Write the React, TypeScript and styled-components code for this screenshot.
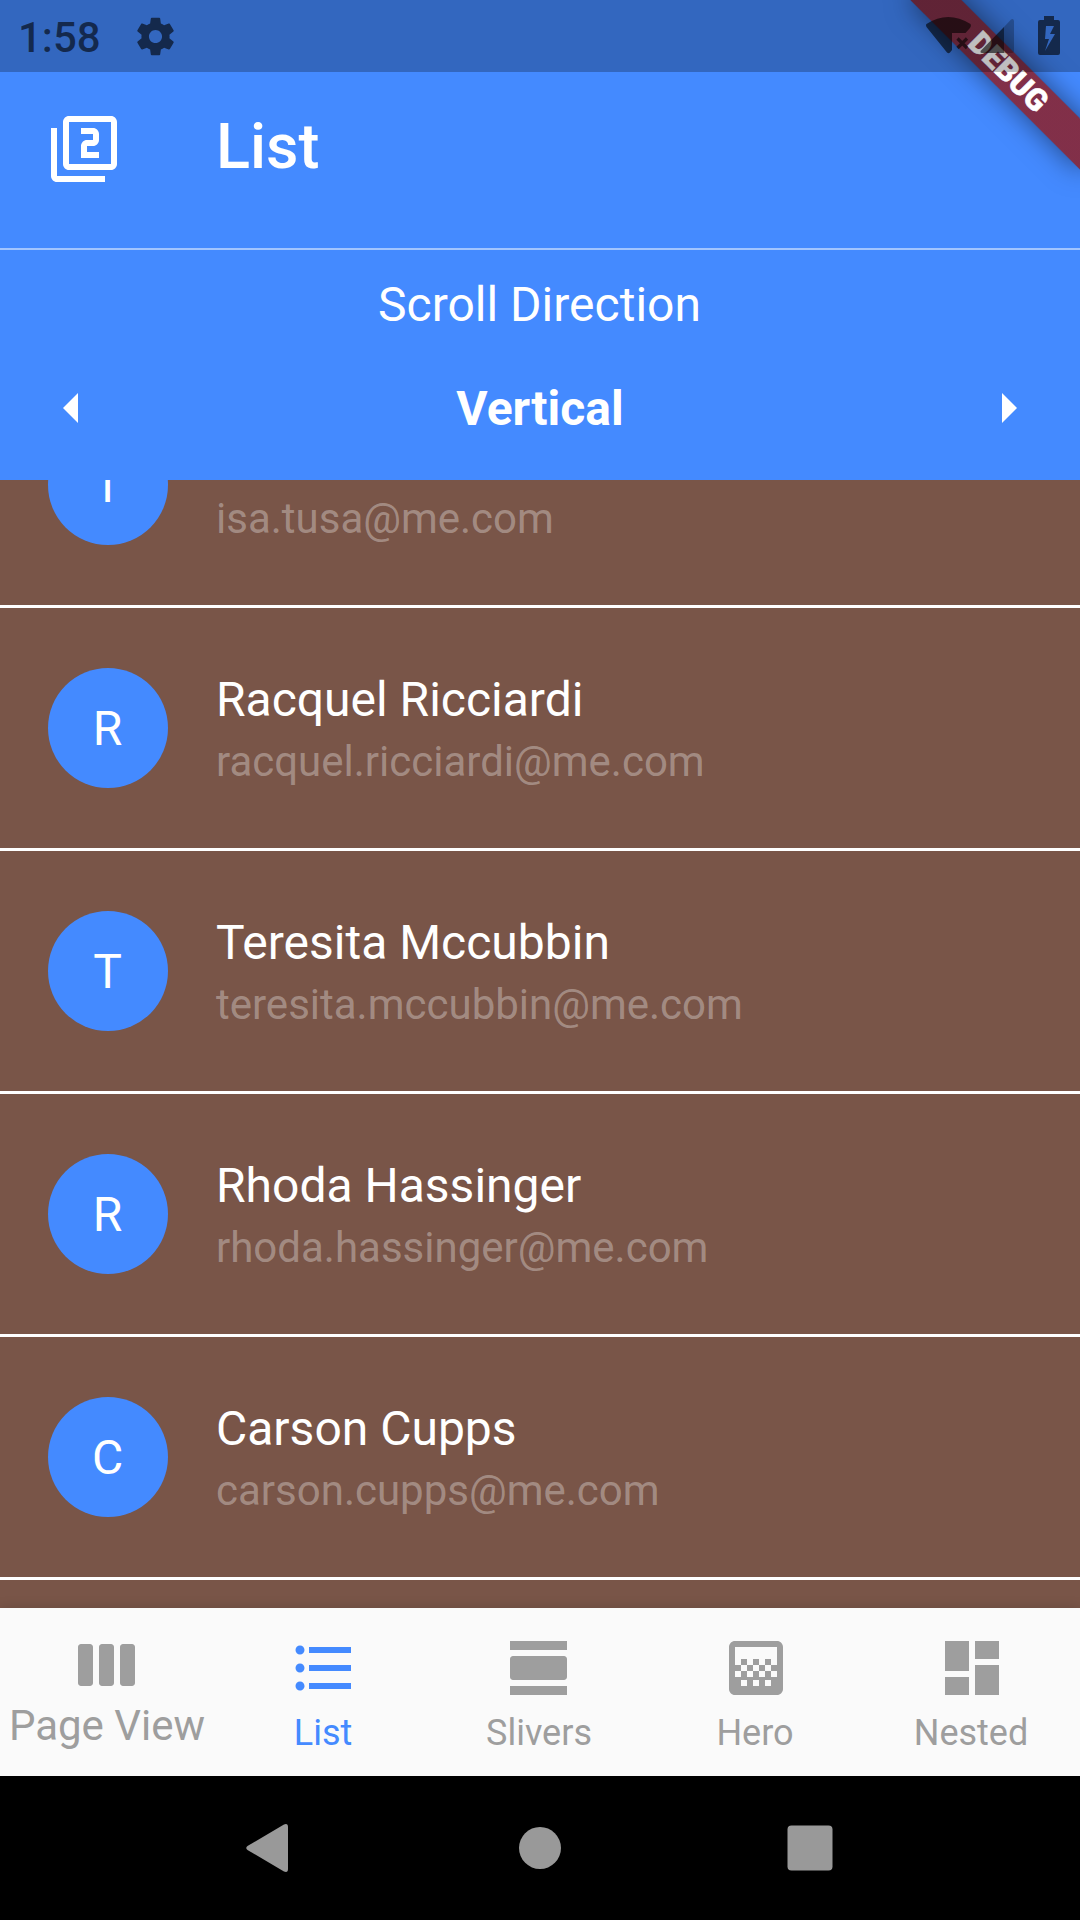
import React from "react";
import styled, { createGlobalStyle } from "styled-components";

const Global = createGlobalStyle`
  html, body { margin: 0; padding: 0; background: #000; }
  * { box-sizing: border-box; }
`;

const Screen = styled.div`
  position: relative;
  width: 1080px;
  height: 1920px;
  display: flex;
  flex-direction: column;
  overflow: hidden;
  font-family: Roboto, sans-serif;
  color: #fff;
`;

const StatusBar = styled.div`
  position: absolute;
  z-index: 3;
  inset: 0 0 auto 0;
  height: 72px;
  display: flex;
  align-items: center;
  padding: 0 20px 0 18px;
  background: rgba(0, 0, 0, 0.25);
  color: rgba(0, 0, 0, 0.6);
`;

const Clock = styled.span`
  width: 112px;
  font-size: 42px;
  line-height: 50px;
  font-weight: 500;
  padding-top: 3px;
`;

const Glyph = styled.svg<{ $w: number; $h: number; $ml?: number }>`
  display: block;
  flex: none;
  width: ${(p) => p.$w}px;
  height: ${(p) => p.$h}px;
  margin-left: ${(p) => p.$ml ?? 0}px;
  fill: currentColor;
`;

const Spacer = styled.div`
  flex: 1;
`;

const BannerCorner = styled.div`
  position: absolute;
  z-index: 2;
  top: 0;
  right: 0;
  width: 300px;
  height: 300px;
  overflow: hidden;
  pointer-events: none;
`;

const BannerRibbon = styled.div`
  position: absolute;
  top: 83.5px;
  left: 180px;
  width: 240px;
  height: 36px;
  transform-origin: 120px -83.5px;
  transform: rotate(45deg);
  display: flex;
  align-items: center;
  justify-content: center;
  background: linear-gradient(rgba(183, 28, 28, 0.627), rgba(183, 28, 28, 0.627)),
    rgba(0, 0, 0, 0.42);
  box-shadow: 0 0 28px rgba(0, 0, 0, 0.5);
  font-size: 30.6px;
  line-height: 36px;
  font-weight: 900;
  -webkit-text-stroke: 0.6px #fff;
`;

const Header = styled.header`
  flex: none;
  height: 480px;
  padding-top: 72px;
  display: flex;
  flex-direction: column;
  background: #448aff;
`;

const TitleRow = styled.div`
  height: 176px;
  display: flex;
  align-items: flex-start;
  padding: 41px 48px 0;
`;

const Title = styled.h1`
  margin: -2px 0 0 96px;
  font-size: 63px;
  line-height: 72px;
  font-weight: 500;
`;

const HeaderRule = styled.div`
  height: 2px;
  background: rgba(255, 255, 255, 0.5);
`;

const OptionLabel = styled.div`
  margin: 27px 1px 0 0;
  text-align: center;
  font-size: 48px;
  line-height: 56px;
`;

const OptionRow = styled.div`
  display: flex;
  align-items: center;
  justify-content: space-between;
  height: 72px;
  margin-top: 39px;
  padding: 0 36px;
`;

const OptionValue = styled.span`
  padding-top: 2px;
  font-size: 48px;
  line-height: 56px;
  font-weight: 700;
`;

const List = styled.main`
  flex: none;
  height: 1128px;
  overflow: hidden;
  display: flex;
  flex-direction: column;
  background: #795548;
`;

const Row = styled.div<{ $offset?: number }>`
  flex: none;
  height: 243px;
  margin-top: ${(p) => p.$offset ?? 0}px;
  display: flex;
  align-items: center;
  padding: 0 48px;
  border-bottom: 3px solid #fff;
`;

const Avatar = styled.div`
  flex: none;
  width: 120px;
  height: 120px;
  border-radius: 50%;
  display: flex;
  align-items: center;
  justify-content: center;
  padding: 2px 1px 0 0;
  background: #448aff;
  font-size: 48px;
  line-height: 56px;
`;

const Contact = styled.div`
  margin-left: 48px;
  padding-top: 2px;
`;

const Name = styled.div`
  font-size: 48px;
  line-height: 57px;
`;

const Email = styled.div`
  margin-top: 8px;
  font-size: 42px;
  line-height: 51px;
  color: rgba(255, 255, 255, 0.33);
`;

const Tabs = styled.nav`
  flex: none;
  height: 168px;
  display: flex;
  background: #fafafa;
  box-shadow: 0 0 12px rgba(0, 0, 0, 0.15);
`;

const Tab = styled.div<{ $active?: boolean; $large?: boolean }>`
  width: 216px;
  display: flex;
  flex-direction: column;
  align-items: center;
  gap: ${(p) => (p.$large ? 0 : 4)}px;
  padding-top: ${(p) => (p.$large ? 21 : 24)}px;
  color: ${(p) => (p.$active ? "#448aff" : "#9e9e9e")};
  font-size: ${(p) => (p.$large ? 42 : 36)}px;
  line-height: 50px;
  white-space: nowrap;
`;

const TabLabel = styled.span`
  margin-right: 2px;
`;

const SystemNav = styled.footer`
  flex: none;
  height: 144px;
  display: flex;
  align-items: center;
  justify-content: center;
  gap: 198px;
  background: #000;
  color: #999;
`;

const contacts = [
  { name: "Isa Tusa", email: "isa.tusa@me.com" },
  { name: "Racquel Ricciardi", email: "racquel.ricciardi@me.com" },
  { name: "Teresita Mccubbin", email: "teresita.mccubbin@me.com" },
  { name: "Rhoda Hassinger", email: "rhoda.hassinger@me.com" },
  { name: "Carson Cupps", email: "carson.cupps@me.com" },
];

const icon = {
  filter2:
    "M3 5H1v16c0 1.1.9 2 2 2h16v-2H3V5zm18-4H7c-1.1 0-2 .9-2 2v14c0 1.1.9 2 2 2h14c1.1 0 2-.9 2-2V3c0-1.1-.9-2-2-2zm0 16H7V3h14v14zm-4-4h-4v-2h2c1.1 0 2-.89 2-2V7c0-1.11-.9-2-2-2h-4v2h4v2h-2c-1.1 0-2 .89-2 2v4h6v-2z",
  columns:
    "M3 5h3c.55 0 1 .45 1 1v12c0 .55-.45 1-1 1H3c-.55 0-1-.45-1-1V6c0-.55.45-1 1-1zm7 0h3c.55 0 1 .45 1 1v12c0 .55-.45 1-1 1h-3c-.55 0-1-.45-1-1V6c0-.55.45-1 1-1zm7 0h3c.55 0 1 .45 1 1v12c0 .55-.45 1-1 1h-3c-.55 0-1-.45-1-1V6c0-.55.45-1 1-1z",
  bullets:
    "M4 10.5c-.83 0-1.5.67-1.5 1.5s.67 1.5 1.5 1.5 1.5-.67 1.5-1.5-.67-1.5-1.5-1.5zm0-6c-.83 0-1.5.67-1.5 1.5S3.17 7.5 4 7.5 5.5 6.83 5.5 6 4.83 4.5 4 4.5zm0 12c-.83 0-1.5.68-1.5 1.5s.68 1.5 1.5 1.5 1.5-.68 1.5-1.5-.67-1.5-1.5-1.5zM7 19h14v-2H7v2zm0-6h14v-2H7v2zm0-8v2h14V5H7z",
  day: "M2 21h19v-3H2v3zM20 8H3c-.55 0-1 .45-1 1v6c0 .55.45 1 1 1h17c.55 0 1-.45 1-1V9c0-.55-.45-1-1-1zM2 3v3h19V3H2z",
  gradient:
    "M11 9h2v2h-2zm-2 2h2v2H9zm4 0h2v2h-2zm2-2h2v2h-2zM7 9h2v2H7zm12-6H5c-1.1 0-2 .9-2 2v14c0 1.1.9 2 2 2h14c1.1 0 2-.9 2-2V5c0-1.1-.9-2-2-2zM9 18H7v-2h2v2zm4 0h-2v-2h2v2zm4 0h-2v-2h2v2zm2-7h-2v2h2v2h-2v-2h-2v2h-2v-2h-2v2H9v-2H7v2H5v-2h2v-2H5V5h14v6z",
  dashboard:
    "M3 13h8V3H3v10zm0 8h8v-6H3v6zm10 0h8V11h-8v10zm0-18v6h8V3h-8z",
  gear: "M19.43 12.98c.04-.32.07-.64.07-.98s-.03-.66-.07-.98l2.11-1.65c.19-.15.24-.42.12-.64l-2-3.46c-.12-.22-.39-.3-.61-.22l-2.49 1c-.52-.4-1.08-.73-1.69-.98l-.38-2.65C14.46 2.18 14.25 2 14 2h-4c-.25 0-.46.18-.49.42l-.38 2.65c-.61.25-1.17.59-1.69.98l-2.49-1c-.23-.09-.49 0-.61.22l-2 3.46c-.13.22-.07.49.12.64l2.11 1.65c-.04.32-.07.65-.07.98s.03.66.07.98l-2.11 1.65c-.19.15-.24.42-.12.64l2 3.46c.12.22.39.3.61.22l2.49-1c.52.4 1.08.73 1.69.98l.38 2.65c.03.24.24.42.49.42h4c.25 0 .46-.18.49-.42l.38-2.65c.61-.25 1.17-.59 1.69-.98l2.49 1c.23.09.49 0 .61-.22l2-3.46c.12-.22.07-.49-.12-.64l-2.11-1.65zM12 15.5c-1.93 0-3.5-1.57-3.5-3.5s1.57-3.5 3.5-3.5 3.5 1.57 3.5 3.5-1.57 3.5-3.5 3.5z",
};

const tabs = [
  { label: "Page View", path: icon.columns, large: true },
  { label: "List", path: icon.bullets, active: true },
  { label: "Slivers", path: icon.day },
  { label: "Hero", path: icon.gradient },
  { label: "Nested", path: icon.dashboard },
];

const Icon24 = ({ d }: { d: string }) => (
  <Glyph $w={72} $h={72} viewBox="0 0 24 24">
    <path d={d} />
  </Glyph>
);

export default function App() {
  return (
    <>
      <Global />
      <Screen>
        <StatusBar>
          <Clock>1:58</Clock>
          <Glyph $w={45} $h={45} $ml={2.5} viewBox="0 0 24 24">
            <path d={icon.gear} />
          </Glyph>
          <Spacer />
          <Glyph $w={46} $h={40} viewBox="926 16 46 40">
            <path d="M926.500 24Q948 10 970.500 24Q971.500 26 970 28L965.500 33H952V50L950 52.500Q948.500 54 947 52.500L926.500 27Q925.500 25 926.500 24Z" />
            <path d="M957.500 38.500l9.500 9.500M967 38.500l-9.500 9.500" fill="none" stroke="currentColor" strokeWidth="3.200" />
          </Glyph>
          <Glyph $w={36} $h={38} $ml={7} viewBox="979 18 36 38">
            <path d="M1014 22V52Q1014 54 1012 54H1004V28L1011 20.500Q1013.500 19 1014 22Z" opacity=".4" />
            <path d="M1004 28V54H982Q979.500 53.500 981 51.500Z" />
          </Glyph>
          <Glyph $w={22} $h={40} $ml={23} viewBox="1038 16 22 40">
            <path fillRule="evenodd" d="M1044 16h10v4h4q2 0 2 2v31q0 2-2 2h-18q-2 0-2-2V22q0-2 2-2h4ZM1046 26l-1 13h4l-4 12 10-17h-5l4-8Z" />
          </Glyph>
        </StatusBar>

        <BannerCorner>
          <BannerRibbon>DEBUG</BannerRibbon>
        </BannerCorner>

        <Header>
          <TitleRow>
            <Icon24 d={icon.filter2} />
            <Title>List</Title>
          </TitleRow>
          <HeaderRule />
          <OptionLabel>Scroll Direction</OptionLabel>
          <OptionRow>
            <Glyph $w={72} $h={72} viewBox="0 0 24 24">
              <path d="M14 7l-5 5 5 5V7z" />
            </Glyph>
            <OptionValue>Vertical</OptionValue>
            <Glyph $w={72} $h={72} viewBox="0 0 24 24">
              <path d="M10 17l5-5-5-5v10z" />
            </Glyph>
          </OptionRow>
        </Header>

        <List>
          {contacts.map((c, i) => (
            <Row key={c.email} $offset={i === 0 ? -115 : 0}>
              <Avatar>{c.name[0]}</Avatar>
              <Contact>
                <Name>{c.name}</Name>
                <Email>{c.email}</Email>
              </Contact>
            </Row>
          ))}
        </List>

        <Tabs>
          {tabs.map((t) => (
            <Tab key={t.label} $active={t.active} $large={t.large}>
              <Icon24 d={t.path} />
              <TabLabel>{t.label}</TabLabel>
            </Tab>
          ))}
        </Tabs>

        <SystemNav>
          <Glyph $w={72} $h={72} viewBox="234 1812 72 72">
            <path d="M247.500 1846L284 1824.500Q288 1823 288 1827V1869Q288 1873 284 1871.500L247.500 1850Q245 1848 247.500 1846Z" />
          </Glyph>
          <Glyph $w={72} $h={72} viewBox="0 0 72 72">
            <circle cx="36" cy="36" r="21" />
          </Glyph>
          <Glyph $w={72} $h={72} viewBox="0 0 72 72">
            <rect x="13.500" y="13.500" width="45" height="45" rx="4" />
          </Glyph>
        </SystemNav>
      </Screen>
    </>
  );
}
